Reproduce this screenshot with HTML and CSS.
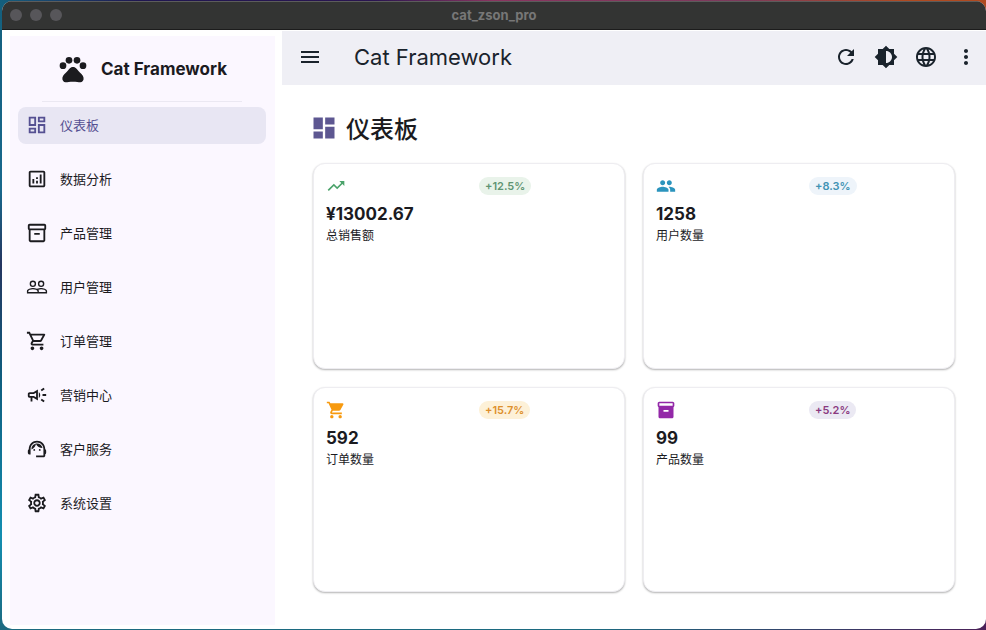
FILE: index.html
```html
<!DOCTYPE html>
<html lang="zh-CN">
<head>
<meta charset="utf-8">
<meta name="viewport" content="width=device-width, initial-scale=1">
<title>cat_zson_pro</title>
<link rel="stylesheet" href="styles.css">
</head>
<body>
<div class="window">
  <header class="titlebar">
    <div class="lights"><span class="light"></span><span class="light"></span><span class="light"></span></div>
    <span class="window-title">cat_zson_pro</span>
  </header>
  <div class="shell">
    <aside class="sidebar">
      <div class="brand">
        <svg class="brand-icon" viewBox="0 0 24 24"><circle cx="4.5" cy="9.5" r="2.5"/><circle cx="9" cy="5.5" r="2.5"/><circle cx="15" cy="5.5" r="2.5"/><circle cx="19.5" cy="9.5" r="2.5"/><path d="M17.34 14.86c-.87-1.02-1.6-1.89-2.48-2.91-.46-.54-1.05-1.08-1.75-1.32-.11-.04-.22-.07-.33-.09-.25-.04-.52-.04-.78-.04s-.53 0-.79.05c-.11.02-.22.05-.33.09-.7.24-1.28.78-1.75 1.32-.87 1.02-1.6 1.89-2.48 2.91-1.31 1.31-2.92 2.76-2.62 4.79.29 1.02 1.02 2.03 2.33 2.32.73.15 3.06-.44 5.54-.44h.18c2.48 0 4.81.58 5.54.44 1.31-.29 2.04-1.31 2.33-2.32.31-2.04-1.3-3.49-2.61-4.8z"/></svg>
        <span class="brand-name">Cat Framework</span>
      </div>
      <nav class="nav">
        <a class="nav-item active" href="#dashboard" aria-current="page">
          <svg class="nav-icon" viewBox="0 0 24 24"><path d="M19 5v2h-4V5h4M9 5v6H5V5h4m10 8v6h-4v-6h4M9 17v2H5v-2h4M21 3h-8v6h8V3zM11 3H3v10h8V3zm10 8h-8v10h8V11zm-10 4H3v6h8v-6z"/></svg>
          仪表板</a>
        <a class="nav-item" href="#analytics">
          <svg class="nav-icon" viewBox="0 0 24 24"><path d="M19 3H5c-1.1 0-2 .9-2 2v14c0 1.1.9 2 2 2h14c1.1 0 2-.9 2-2V5c0-1.1-.9-2-2-2zm0 16H5V5h14v14z"/><path d="M7 12h2v5H7zM15 7h2v10h-2zM11 14h2v3h-2zM11 10h2v2h-2z"/></svg>
          数据分析</a>
        <a class="nav-item" href="#products">
          <svg class="nav-icon" viewBox="0 0 24 24"><path d="M20 2H4c-1 0-2 .9-2 2v3.01c0 .72.43 1.34 1 1.69V20c0 1.1 1.1 2 2 2h14c.9 0 2-.9 2-2V8.7c.57-.35 1-.97 1-1.69V4c0-1.1-1-2-2-2zm-1 18H5V9h14v11zm1-13H4V4h16v3z"/><path d="M9 12h6v2H9z"/></svg>
          产品管理</a>
        <a class="nav-item" href="#users">
          <svg class="nav-icon" viewBox="0 0 24 24"><path fill-rule="evenodd" d="M16.5 13c-1.2 0-3.07.34-4.5 1-1.43-.67-3.3-1-4.5-1C5.33 13 1 14.08 1 16.25V19h22v-2.75c0-2.17-4.33-3.25-6.5-3.25zm-4 4.5h-10v-1.25c0-.54 2.56-1.75 5-1.75s5 1.21 5 1.75v1.25zm9 0H14v-1.25c0-.46-.2-.86-.52-1.22.88-.3 1.96-.53 3.02-.53 2.44 0 5 1.21 5 1.75v1.25zM7.5 12a3.5 3.5 0 1 0 0-7 3.5 3.5 0 0 0 0 7zm0-5.5a2 2 0 1 1 0 4 2 2 0 0 1 0-4zM16.5 12a3.5 3.5 0 1 0 0-7 3.5 3.5 0 0 0 0 7zm0-5.5a2 2 0 1 1 0 4 2 2 0 0 1 0-4z"/></svg>
          用户管理</a>
        <a class="nav-item" href="#orders">
          <svg class="nav-icon" viewBox="0 0 24 24"><path d="M15.55 13c.75 0 1.41-.41 1.75-1.03l3.58-6.49c.37-.66-.11-1.48-.87-1.48H5.21l-.94-2H1v2h2l3.6 7.59-1.35 2.44C4.52 15.37 5.48 17 7 17h12v-2H7l1.1-2h7.45zM6.16 6h12.15l-2.76 5H8.53L6.16 6zM7 18c-1.1 0-1.99.9-1.99 2S5.9 22 7 22s2-.9 2-2-.9-2-2-2zm10 0c-1.1 0-1.99.9-1.99 2s.89 2 1.99 2 2-.9 2-2-.9-2-2-2z"/></svg>
          订单管理</a>
        <a class="nav-item" href="#marketing">
          <svg class="nav-icon" viewBox="0 0 24 24"><path d="M18 11v2h4v-2h-4zm-2 6.61c.96.71 2.21 1.65 3.2 2.39.4-.53.8-1.07 1.2-1.6-.99-.74-2.24-1.68-3.2-2.4-.4.54-.8 1.08-1.2 1.61zM20.4 5.6c-.4-.53-.8-1.07-1.2-1.6-.99.74-2.24 1.68-3.2 2.4.4.53.8 1.07 1.2 1.6.96-.72 2.21-1.65 3.2-2.4zM4 9c-1.1 0-2 .9-2 2v2c0 1.1.9 2 2 2h1v4h2v-4h1l5 3V6L8 9H4zm5.03 1.71L11 9.53v4.94l-1.97-1.18-.48-.29H4v-2h4.55l.48-.29zM15.5 12c0-1.33-.58-2.53-1.5-3.35v6.69c.92-.81 1.5-2.01 1.5-3.34z"/></svg>
          营销中心</a>
        <a class="nav-item" href="#support">
          <svg class="nav-icon" viewBox="0 0 24 24"><path d="M21 12.22C21 6.73 16.74 3 12 3c-4.69 0-9 3.65-9 9.28-.6.34-1 .98-1 1.72v2c0 1.1.9 2 2 2h1v-6.1c0-3.87 3.13-7 7-7s7 3.13 7 7V19h-8v2h8c1.1 0 2-.9 2-2v-1.22c.59-.31 1-.92 1-1.64v-2.3c0-.7-.41-1.31-1-1.62z"/><circle cx="9" cy="13" r="1"/><circle cx="15" cy="13" r="1"/><path d="M18 11.03C17.52 8.18 15.04 6 12.05 6c-3.03 0-6.29 2.51-6.03 6.45 2.47-1.01 4.33-3.21 4.86-5.89 1.31 2.63 4 4.44 7.12 4.47z"/></svg>
          客户服务</a>
        <a class="nav-item" href="#settings">
          <svg class="nav-icon" viewBox="0 0 24 24"><path d="M19.43 12.98c.04-.32.07-.64.07-.98 0-.34-.03-.66-.07-.98l2.11-1.65c.19-.15.24-.42.12-.64l-2-3.46c-.09-.16-.26-.25-.44-.25-.06 0-.12.01-.17.03l-2.49 1c-.52-.4-1.08-.73-1.69-.98l-.38-2.65C14.46 2.18 14.25 2 14 2h-4c-.25 0-.46.18-.49.42l-.38 2.65c-.61.25-1.17.59-1.69.98l-2.49-1c-.06-.02-.12-.03-.18-.03-.17 0-.34.09-.43.25l-2 3.46c-.13.22-.07.49.12.64l2.11 1.65c-.04.32-.07.65-.07.98 0 .33.03.66.07.98l-2.11 1.65c-.19.15-.24.42-.12.64l2 3.46c.09.16.26.25.44.25.06 0 .12-.01.17-.03l2.49-1c.52.4 1.08.73 1.69.98l.38 2.65c.03.24.24.42.49.42h4c.25 0 .46-.18.49-.42l.38-2.65c.61-.25 1.17-.59 1.69-.98l2.49 1c.06.02.12.03.18.03.17 0 .34-.09.43-.25l2-3.46c.12-.22.07-.49-.12-.64l-2.11-1.65zm-1.98-1.71c.04.31.05.52.05.73 0 .21-.02.43-.05.73l-.14 1.13.89.7 1.08.84-.7 1.21-1.27-.51-1.04-.42-.9.68c-.43.32-.84.56-1.25.73l-1.06.43-.16 1.13-.2 1.35h-1.4l-.19-1.35-.16-1.13-1.06-.43c-.43-.18-.83-.41-1.23-.71l-.91-.7-1.06.43-1.27.51-.7-1.21 1.08-.84.89-.7-.14-1.13c-.03-.31-.05-.54-.05-.74s.02-.43.05-.73l.14-1.13-.89-.7-1.08-.84.7-1.21 1.27.51 1.04.42.9-.68c.43-.32.84-.56 1.25-.73l1.06-.43.16-1.13.2-1.35h1.39l.19 1.35.16 1.13 1.06.43c.43.18.83.41 1.23.71l.91.7 1.06-.43 1.27-.51.7 1.21-1.07.85-.89.7.14 1.13zM12 8c-2.21 0-4 1.79-4 4s1.79 4 4 4 4-1.79 4-4-1.79-4-4-4zm0 6c-1.1 0-2-.9-2-2s.9-2 2-2 2 .9 2 2-.9 2-2 2z"/></svg>
          系统设置</a>
      </nav>
    </aside>
    <div class="content">
      <div class="appbar">
        <button class="icon-button" type="button" aria-label="菜单"><svg viewBox="0 0 24 24"><path d="M3 18h18v-2H3v2zm0-5h18v-2H3v2zm0-7v2h18V6H3z"/></svg></button>
        <span class="appbar-title">Cat Framework</span>
        <div class="actions">
          <button class="icon-button" type="button" aria-label="刷新"><svg viewBox="0 0 24 24"><path d="M17.65 6.35C16.2 4.9 14.21 4 12 4c-4.42 0-7.99 3.58-7.99 8s3.57 8 7.99 8c3.73 0 6.84-2.55 7.73-6h-2.08c-.82 2.33-3.04 4-5.65 4-3.31 0-6-2.69-6-6s2.69-6 6-6c1.66 0 3.14.69 4.22 1.78L13 11h7V4l-2.35 2.35z"/></svg></button>
          <button class="icon-button" type="button" aria-label="主题"><svg viewBox="0 0 24 24"><path d="M20 15.31L23.31 12 20 8.69V4h-4.69L12 .69 8.69 4H4v4.69L.69 12 4 15.31V20h4.69L12 23.31 15.31 20H20v-4.69zM12 18V6c3.31 0 6 2.69 6 6s-2.69 6-6 6z"/></svg></button>
          <button class="icon-button" type="button" aria-label="语言"><svg viewBox="0 0 24 24"><path d="M11.99 2C6.47 2 2 6.48 2 12s4.47 10 9.99 10C17.52 22 22 17.52 22 12S17.52 2 11.99 2zm6.93 6h-2.95c-.32-1.25-.78-2.45-1.38-3.56 1.84.63 3.37 1.91 4.33 3.56zM12 4.04c.83 1.2 1.48 2.53 1.91 3.96h-3.82c.43-1.43 1.08-2.76 1.91-3.96zM4.26 14C4.1 13.36 4 12.69 4 12s.1-1.36.26-2h3.38c-.08.66-.14 1.32-.14 2s.06 1.34.14 2H4.26zm.82 2h2.95c.32 1.25.78 2.45 1.38 3.56-1.84-.63-3.37-1.9-4.33-3.56zm2.95-8H5.08c.96-1.66 2.49-2.93 4.33-3.56C8.81 5.55 8.35 6.75 8.03 8zM12 19.96c-.83-1.2-1.48-2.53-1.91-3.96h3.82c-.43 1.43-1.08 2.76-1.91 3.96zM14.34 14H9.66c-.09-.66-.16-1.32-.16-2s.07-1.35.16-2h4.68c.09.65.16 1.32.16 2s-.07 1.34-.16 2zm.25 5.56c.6-1.11 1.06-2.31 1.38-3.56h2.95c-.96 1.65-2.49 2.93-4.33 3.56zM16.36 14c.08-.66.14-1.32.14-2s-.06-1.34-.14-2h3.38c.16.64.26 1.31.26 2s-.1 1.36-.26 2h-3.38z"/></svg></button>
          <button class="icon-button" type="button" aria-label="更多"><svg viewBox="0 0 24 24"><path d="M12 8c1.1 0 2-.9 2-2s-.9-2-2-2-2 .9-2 2 .9 2 2 2zm0 2c-1.1 0-2 .9-2 2s.9 2 2 2 2-.9 2-2-.9-2-2-2zm0 6c-1.1 0-2 .9-2 2s.9 2 2 2 2-.9 2-2-.9-2-2-2z"/></svg></button>
        </div>
      </div>
      <main class="page">
        <h1 class="page-title"><svg class="page-icon" viewBox="0 0 24 24"><path d="M3 13h8V3H3v10zm0 8h8v-6H3v6zm10 0h8V11h-8v10zm0-18v6h8V3h-8z"/></svg>仪表板</h1>
        <div class="cards">
          <section class="card sales">
            <div class="card-top">
              <svg class="card-icon" viewBox="0 0 24 24"><path d="M16 6l2.29 2.29-4.88 4.88-4-4L2 16.59 3.41 18l6-6 4 4 6.3-6.29L22 12V6z"/></svg>
              <span class="badge">+12.5%</span>
            </div>
            <div class="value">¥13002.67</div>
            <div class="label">总销售额</div>
          </section>
          <section class="card users">
            <div class="card-top">
              <svg class="card-icon" viewBox="0 0 24 24"><path d="M16 11c1.66 0 2.99-1.34 2.99-3S17.66 5 16 5s-3 1.34-3 3 1.34 3 3 3zm-8 0c1.66 0 2.99-1.34 2.99-3S9.66 5 8 5 5 6.34 5 8s1.34 3 3 3zm0 2c-2.33 0-7 1.17-7 3.5V19h14v-2.5c0-2.33-4.67-3.5-7-3.5zm8 0c-.29 0-.62.02-.97.05 1.16.84 1.97 1.97 1.97 3.45V19h6v-2.5c0-2.33-4.67-3.5-7-3.5z"/></svg>
              <span class="badge">+8.3%</span>
            </div>
            <div class="value">1258</div>
            <div class="label">用户数量</div>
          </section>
          <section class="card orders">
            <div class="card-top">
              <svg class="card-icon" viewBox="0 0 24 24"><path d="M7 18c-1.1 0-1.99.9-1.99 2S5.9 22 7 22s2-.9 2-2-.9-2-2-2zM1 2v2h2l3.6 7.59-1.35 2.45c-.16.28-.25.61-.25.96 0 1.1.9 2 2 2h12v-2H7.42c-.14 0-.25-.11-.25-.25l.03-.12.9-1.63h7.45c.75 0 1.41-.41 1.75-1.03l3.58-6.49c.08-.14.12-.31.12-.48 0-.55-.45-1-1-1H5.21l-.94-2H1zm16 16c-1.1 0-1.99.9-1.99 2s.89 2 1.99 2 2-.9 2-2-.9-2-2-2z"/></svg>
              <span class="badge">+15.7%</span>
            </div>
            <div class="value">592</div>
            <div class="label">订单数量</div>
          </section>
          <section class="card products">
            <div class="card-top">
              <svg class="card-icon" viewBox="0 0 24 24"><path d="M20 2H4c-1 0-2 .9-2 2v3.01c0 .72.43 1.34 1 1.69V20c0 1.1 1.1 2 2 2h14c.9 0 2-.9 2-2V8.7c.57-.35 1-.97 1-1.69V4c0-1.1-1-2-2-2zm-5 12H9v-2h6v2zm5-7H4V4h16v3z"/></svg>
              <span class="badge">+5.2%</span>
            </div>
            <div class="value">99</div>
            <div class="label">产品数量</div>
          </section>
        </div>
      </main>
    </div>
  </div>
</div>
</body>
</html>
```
FILE: styles.css
```css
* {
  box-sizing: border-box;
}

body {
  margin: 0;
  min-height: 100vh;
  display: flex;
  padding: 1px 0 1px 2px;
  background:
    linear-gradient(90deg, #14607e 0%, #1f1650 14%, #2a1450 38%, #8a3460 50%, #7c3a5c 75%, #b04a20 92%, #b04a20 100%) top / 100% 20px no-repeat,
    linear-gradient(90deg, transparent 60%, #4a2058 100%) bottom / 100% 20px no-repeat,
    linear-gradient(180deg, #14607e 0%, #1a6c8c 30%, #263860 42%, #10607e 60%, #1490b0 85%, #1c6a80 100%);
  color: #1b1b1f;
  font-family: Inter, "Noto Sans CJK SC", sans-serif;
}

svg {
  display: block;
  flex: none;
  fill: currentColor;
}

.window {
  flex: 1;
  display: flex;
  flex-direction: column;
  background: #fff;
  border-radius: 10px;
  overflow: hidden;
}

.titlebar {
  display: grid;
  grid-template-columns: 1fr auto 1fr;
  align-items: center;
  height: 29px;
  padding: 0 8px 2px;
  background: #333433;
  border-top: 1px solid #5c5c5c;
  border-bottom: 1px solid #1c1c1c;
}

.lights {
  display: flex;
  gap: 8px;
}

.light {
  width: 12px;
  height: 12px;
  border-radius: 50%;
  background: #57565a;
}

.window-title {
  color: #777;
  font-size: 13px;
  font-weight: 700;
}

.shell {
  flex: 1;
  display: flex;
  padding-top: 1px;
}

.sidebar {
  width: 265px;
  flex: none;
  margin: 5px 7px 4px 8px;
  padding: 0 9px 0 8px;
  background: #fbf7ff;
}

.brand {
  display: flex;
  align-items: center;
  justify-content: center;
  gap: 12px;
  height: 66px;
  margin: 0 24px 5px;
  border-bottom: 1px solid #ebe8f2;
}

.brand-icon {
  width: 32px;
  height: 32px;
}

.brand-name {
  font-size: 17px;
  font-weight: 700;
  white-space: nowrap;
}

.nav {
  display: flex;
  flex-direction: column;
  gap: 17px;
}

.nav-item {
  display: flex;
  align-items: center;
  gap: 12px;
  height: 37px;
  padding: 0 8px 1px;
  border-radius: 8px;
  color: inherit;
  font-family: "Noto Sans CJK SC", sans-serif;
  font-size: 13px;
  line-height: 20px;
  text-decoration: none;
}

.nav-item.active {
  background: #e8e6f3;
  color: #555092;
}

.nav-icon {
  width: 22px;
  height: 22px;
}

.content {
  flex: 1;
  display: flex;
  flex-direction: column;
  min-width: 0;
}

.appbar {
  display: flex;
  align-items: center;
  height: 54px;
  padding: 0 0 2px 8px;
  background: #efeff5;
  color: #1a232c;
}

.icon-button {
  display: grid;
  place-items: center;
  width: 40px;
  height: 40px;
  padding: 0;
  border: 0;
  background: none;
  color: inherit;
}

.icon-button svg {
  width: 24px;
  height: 24px;
}

.appbar-title {
  flex: 1;
  padding-left: 24px;
  font-size: 22px;
}

.actions {
  display: flex;
}

.page {
  flex: 1;
  display: flex;
  flex-direction: column;
  gap: 18px;
  padding: 26px 31px 37px;
}

.page-title {
  display: flex;
  align-items: center;
  gap: 8px;
  height: 34px;
  margin: 0 -3px;
  font-family: "Noto Sans CJK SC", sans-serif;
  font-size: 24px;
  font-weight: 500;
  line-height: 34px;
}

.page-icon {
  width: 28px;
  height: 28px;
  color: #5d5791;
}

.cards {
  flex: 1;
  display: grid;
  grid-template-columns: 1fr 1fr;
  grid-auto-rows: 1fr;
  gap: 18px;
}

.card {
  padding: 12px;
  background: #fff;
  border: 1px solid #eeedf1;
  border-radius: 12px;
  box-shadow: 0 1px 2px #0000004d;
}

.card-top {
  display: grid;
  grid-template-columns: 1fr 1fr;
  column-gap: 20px;
  align-items: center;
  height: 20px;
  margin-bottom: 8px;
}

.card-icon {
  width: 20px;
  height: 20px;
}

.badge {
  justify-self: start;
  padding: 0 6px;
  border-radius: 10px;
  font-size: 11px;
  font-weight: 600;
  line-height: 18px;
}

.value {
  font-size: 17px;
  font-weight: 700;
  line-height: 20px;
}

.label {
  margin-top: 2px;
  font-size: 12px;
  line-height: 20px;
}

.sales .card-icon { color: #4ba36b; }
.sales .badge { background: #e9f3ea; color: #5f9472; }
.users .card-icon { color: #2b94bd; }
.users .badge { background: #eef4fa; color: #4193b4; }
.orders .card-icon { color: #f79a10; }
.orders .badge { background: #fdf1d8; color: #dd902c; }
.products .card-icon { color: #9328a8; }
.products .badge { background: #ebe9f3; color: #8a3a80; }
```
